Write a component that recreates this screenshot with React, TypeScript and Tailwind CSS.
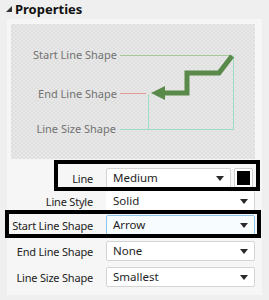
import React from "react";

function Caret() {
  return (
    <svg width="8" height="5" viewBox="0 0 8 5" className="shrink-0">
      <path d="M0 0 L8 0 L4 5 Z" fill="#2a2a2a" />
    </svg>
  );
}

function Select({ value, focused, className = "" }: { value: string; focused?: boolean; className?: string }) {
  return (
    <div
      className={
        "flex items-center justify-between h-[20px] pl-[6px] pr-[6px] rounded-[2px] border " +
        (focused ? "border-[#8ec3ea] bg-[#f7fcff] " : "border-[#d4d4d4] bg-white ") +
        className
      }
    >
      <span className="text-[11.5px] text-[#1e1e1e] leading-none">{value}</span>
      <Caret />
    </div>
  );
}

function Row({ label, children, className = "" }: { label: string; children: React.ReactNode; className?: string }) {
  return (
    <div className={"flex items-center " + className}>
      <div className="w-[86px] text-right text-[11px] tracking-[-0.2px] text-[#222] leading-none whitespace-nowrap">
        {label}
      </div>
      <div className="ml-[13px] flex-1 flex items-center gap-[2px]">{children}</div>
    </div>
  );
}

export default function App() {
  return (
    <div
      className="relative w-[269px] h-[300px] overflow-hidden bg-[#efefef]"
      style={{ fontFamily: '"Noto Sans", "Open Sans", sans-serif' }}
    >
      {/* header */}
      <div className="flex items-center h-[17px] pl-[6px] pt-[1px]">
        <svg width="6" height="6" viewBox="0 0 6 6">
          <path d="M6 0 L6 6 L0 6 Z" fill="#333" />
        </svg>
        <span className="ml-[3px] text-[13px] font-bold text-[#111] leading-none">Properties</span>
      </div>

      {/* content area */}
      <div className="mx-[7px] mt-[2px] h-[276px] bg-[#f6f6f6] pt-[5px]">
        {/* diagram panel */}
        <div className="relative ml-[4px] w-[244px] h-[135px] bg-[repeating-conic-gradient(#dfdfdf_0_25%,#e8e8e8_0_50%)] bg-[length:4px_4px]">
          <svg className="absolute left-0 top-0" width="244" height="135" viewBox="11 24 244 135">
            <line x1="120" y1="55.5" x2="232" y2="55.5" stroke="#a9c99c" strokeWidth="1" />
            <line x1="233.5" y1="55" x2="233.5" y2="129" stroke="#9fdcc2" strokeWidth="1" />
            <line x1="120" y1="129.5" x2="234" y2="129.5" stroke="#9fdcc2" strokeWidth="1" />
            <line x1="148.5" y1="94" x2="148.5" y2="129" stroke="#9fdcc2" strokeWidth="1" />
            <line x1="120" y1="93.5" x2="146" y2="93.5" stroke="#e39a94" strokeWidth="1" />
            <path
              d="M232 56 L219 73 L187 73 L187 93 L162 93"
              fill="none"
              stroke="#5a8a4a"
              strokeWidth="5"
              strokeLinejoin="miter"
            />
            <path d="M151 93 L165 86 L165 100 Z" fill="#5a8a4a" />
          </svg>
          <div className="absolute right-[138px] top-[23px] text-[11px] text-[#727272] whitespace-nowrap leading-[16px]">
            Start Line Shape
          </div>
          <div className="absolute right-[138px] top-[62px] text-[11px] text-[#727272] whitespace-nowrap leading-[16px]">
            End Line Shape
          </div>
          <div className="absolute right-[139px] top-[97px] text-[11px] text-[#727272] whitespace-nowrap leading-[16px]">
            Line Size Shape
          </div>
        </div>

        {/* form */}
        <div className="mt-[9px] pr-[7px] flex flex-col">
          <Row label="Line">
            <Select value="Medium" className="flex-1 mr-[1px]" />
            <div className="w-[19px] h-[20px] mr-[2px] border border-[#cfcfcf] rounded-[2px] bg-white flex items-center justify-center">
              <div className="w-[13px] h-[14px] bg-black" />
            </div>
          </Row>
          <Row label="Line Style" className="mt-[3px]">
            <Select value="Solid" className="flex-1 border-t-transparent border-l-transparent" />
          </Row>
          <Row label="Start Line Shape" className="mt-[4px]">
            <Select value="Arrow" focused className="flex-1" />
          </Row>
          <Row label="End Line Shape" className="mt-[6px]">
            <Select value="None" className="flex-1" />
          </Row>
          <Row label="Line Size Shape" className="mt-[6px]">
            <Select value="Smallest" className="flex-1" />
          </Row>
        </div>
      </div>

      {/* annotation boxes */}
      <div className="absolute left-[54px] top-[160px] w-[206px] h-[31px] border-[4px] border-black" />
      <div className="absolute left-[5px] top-[210px] w-[256px] h-[28px] border-[4px] border-black" />
    </div>
  );
}
